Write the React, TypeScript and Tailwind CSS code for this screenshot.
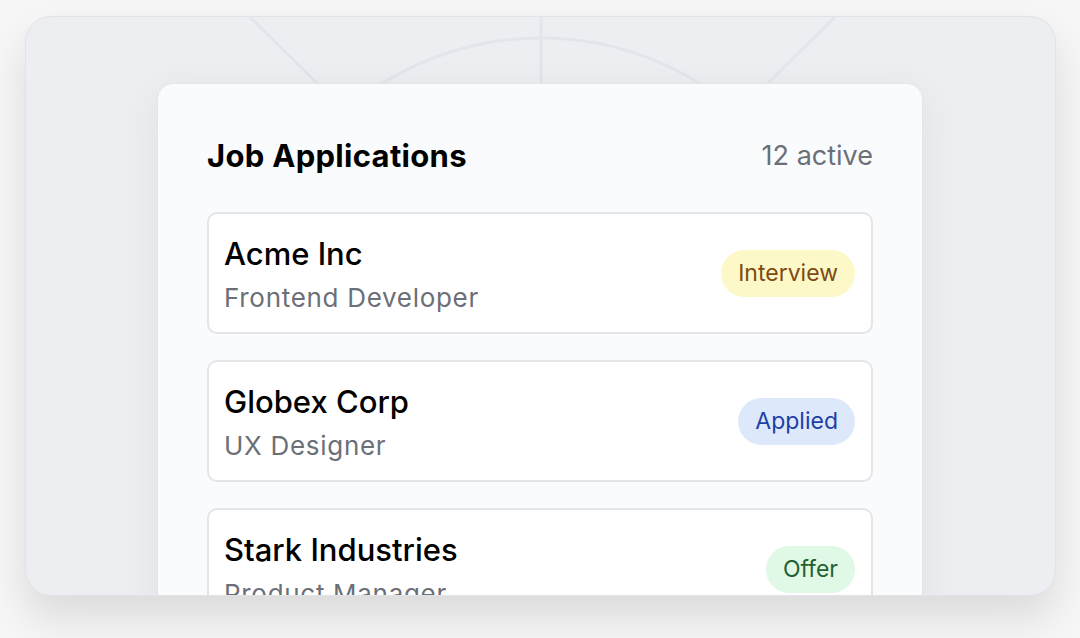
const applications = [
  { company: "Acme Inc", role: "Frontend Developer", status: "Interview" },
  { company: "Globex Corp", role: "UX Designer", status: "Applied" },
  { company: "Stark Industries", role: "Product Manager", status: "Offer" },
]

const badgeStyles: Record<string, string> = {
  Interview: "bg-[#fdf8c7] text-[#7e4a14]",
  Applied: "bg-[#dde8fb] text-[#1e3fa6]",
  Offer: "bg-[#e0f8e6] text-[#23622f]",
}

function Backdrop() {
  // faint guide lines behind the card
  return (
    <svg
      className="absolute inset-0 h-full w-full"
      viewBox="0 0 1031 580"
      fill="none"
      stroke="#e3e5ea"
      strokeWidth="3"
    >
      <line x1="224" y1="0" x2="292" y2="67" />
      <line x1="811" y1="0" x2="743" y2="67" />
      <line x1="516" y1="0" x2="516" y2="67" />
      <circle cx="516" cy="321" r="300" />
    </svg>
  )
}

export default function App() {
  return (
    <div className="min-h-[638px] w-full bg-[#f6f6f6] px-[24px] pt-[16px] font-['Inter',sans-serif]">
      <div className="relative mx-auto h-[580px] w-[1031px] overflow-hidden rounded-[26px] border border-[#e2e3e7] bg-[#edeef2] shadow-[0_22px_40px_rgba(0,0,0,0.11)]">
        <Backdrop />
        <div className="relative mx-auto mt-[66px] w-[766px] rounded-[16px] border border-[#e3e5e9] bg-[#fafbfc] px-[49px] pt-[52px] pb-10 shadow-[0_8px_40px_rgba(0,0,0,0.06)]">
          <div className="flex items-center justify-between">
            <h2 className="text-[31px] leading-[40px] font-bold tracking-[0.3px] text-black">Job Applications</h2>
            <span className="text-[27px] leading-[40px] text-[#6b6f78]">12 active</span>
          </div>
          <ul className="mt-[36px] flex flex-col gap-[26px]">
            {applications.map((app) => (
              <li
                key={app.company}
                className="flex h-[122px] items-center justify-between rounded-[10px] border-2 border-[#e4e5e8] bg-white pt-[22px] pb-[18px] pl-[15px] pr-[16px]"
              >
                <div className="flex flex-col">
                  <span className="text-[31px] leading-[36px] font-medium text-black">{app.company}</span>
                  <span className="mt-[10px] text-[26px] leading-[32px] tracking-[0.7px] text-[#6b6f78]">{app.role}</span>
                </div>
                <span className={`mb-[4px] rounded-full px-[17px] py-[10px] text-[23px] leading-[27px] ${badgeStyles[app.status]}`}>
                  {app.status}
                </span>
              </li>
            ))}
          </ul>
        </div>
      </div>
    </div>
  )
}
